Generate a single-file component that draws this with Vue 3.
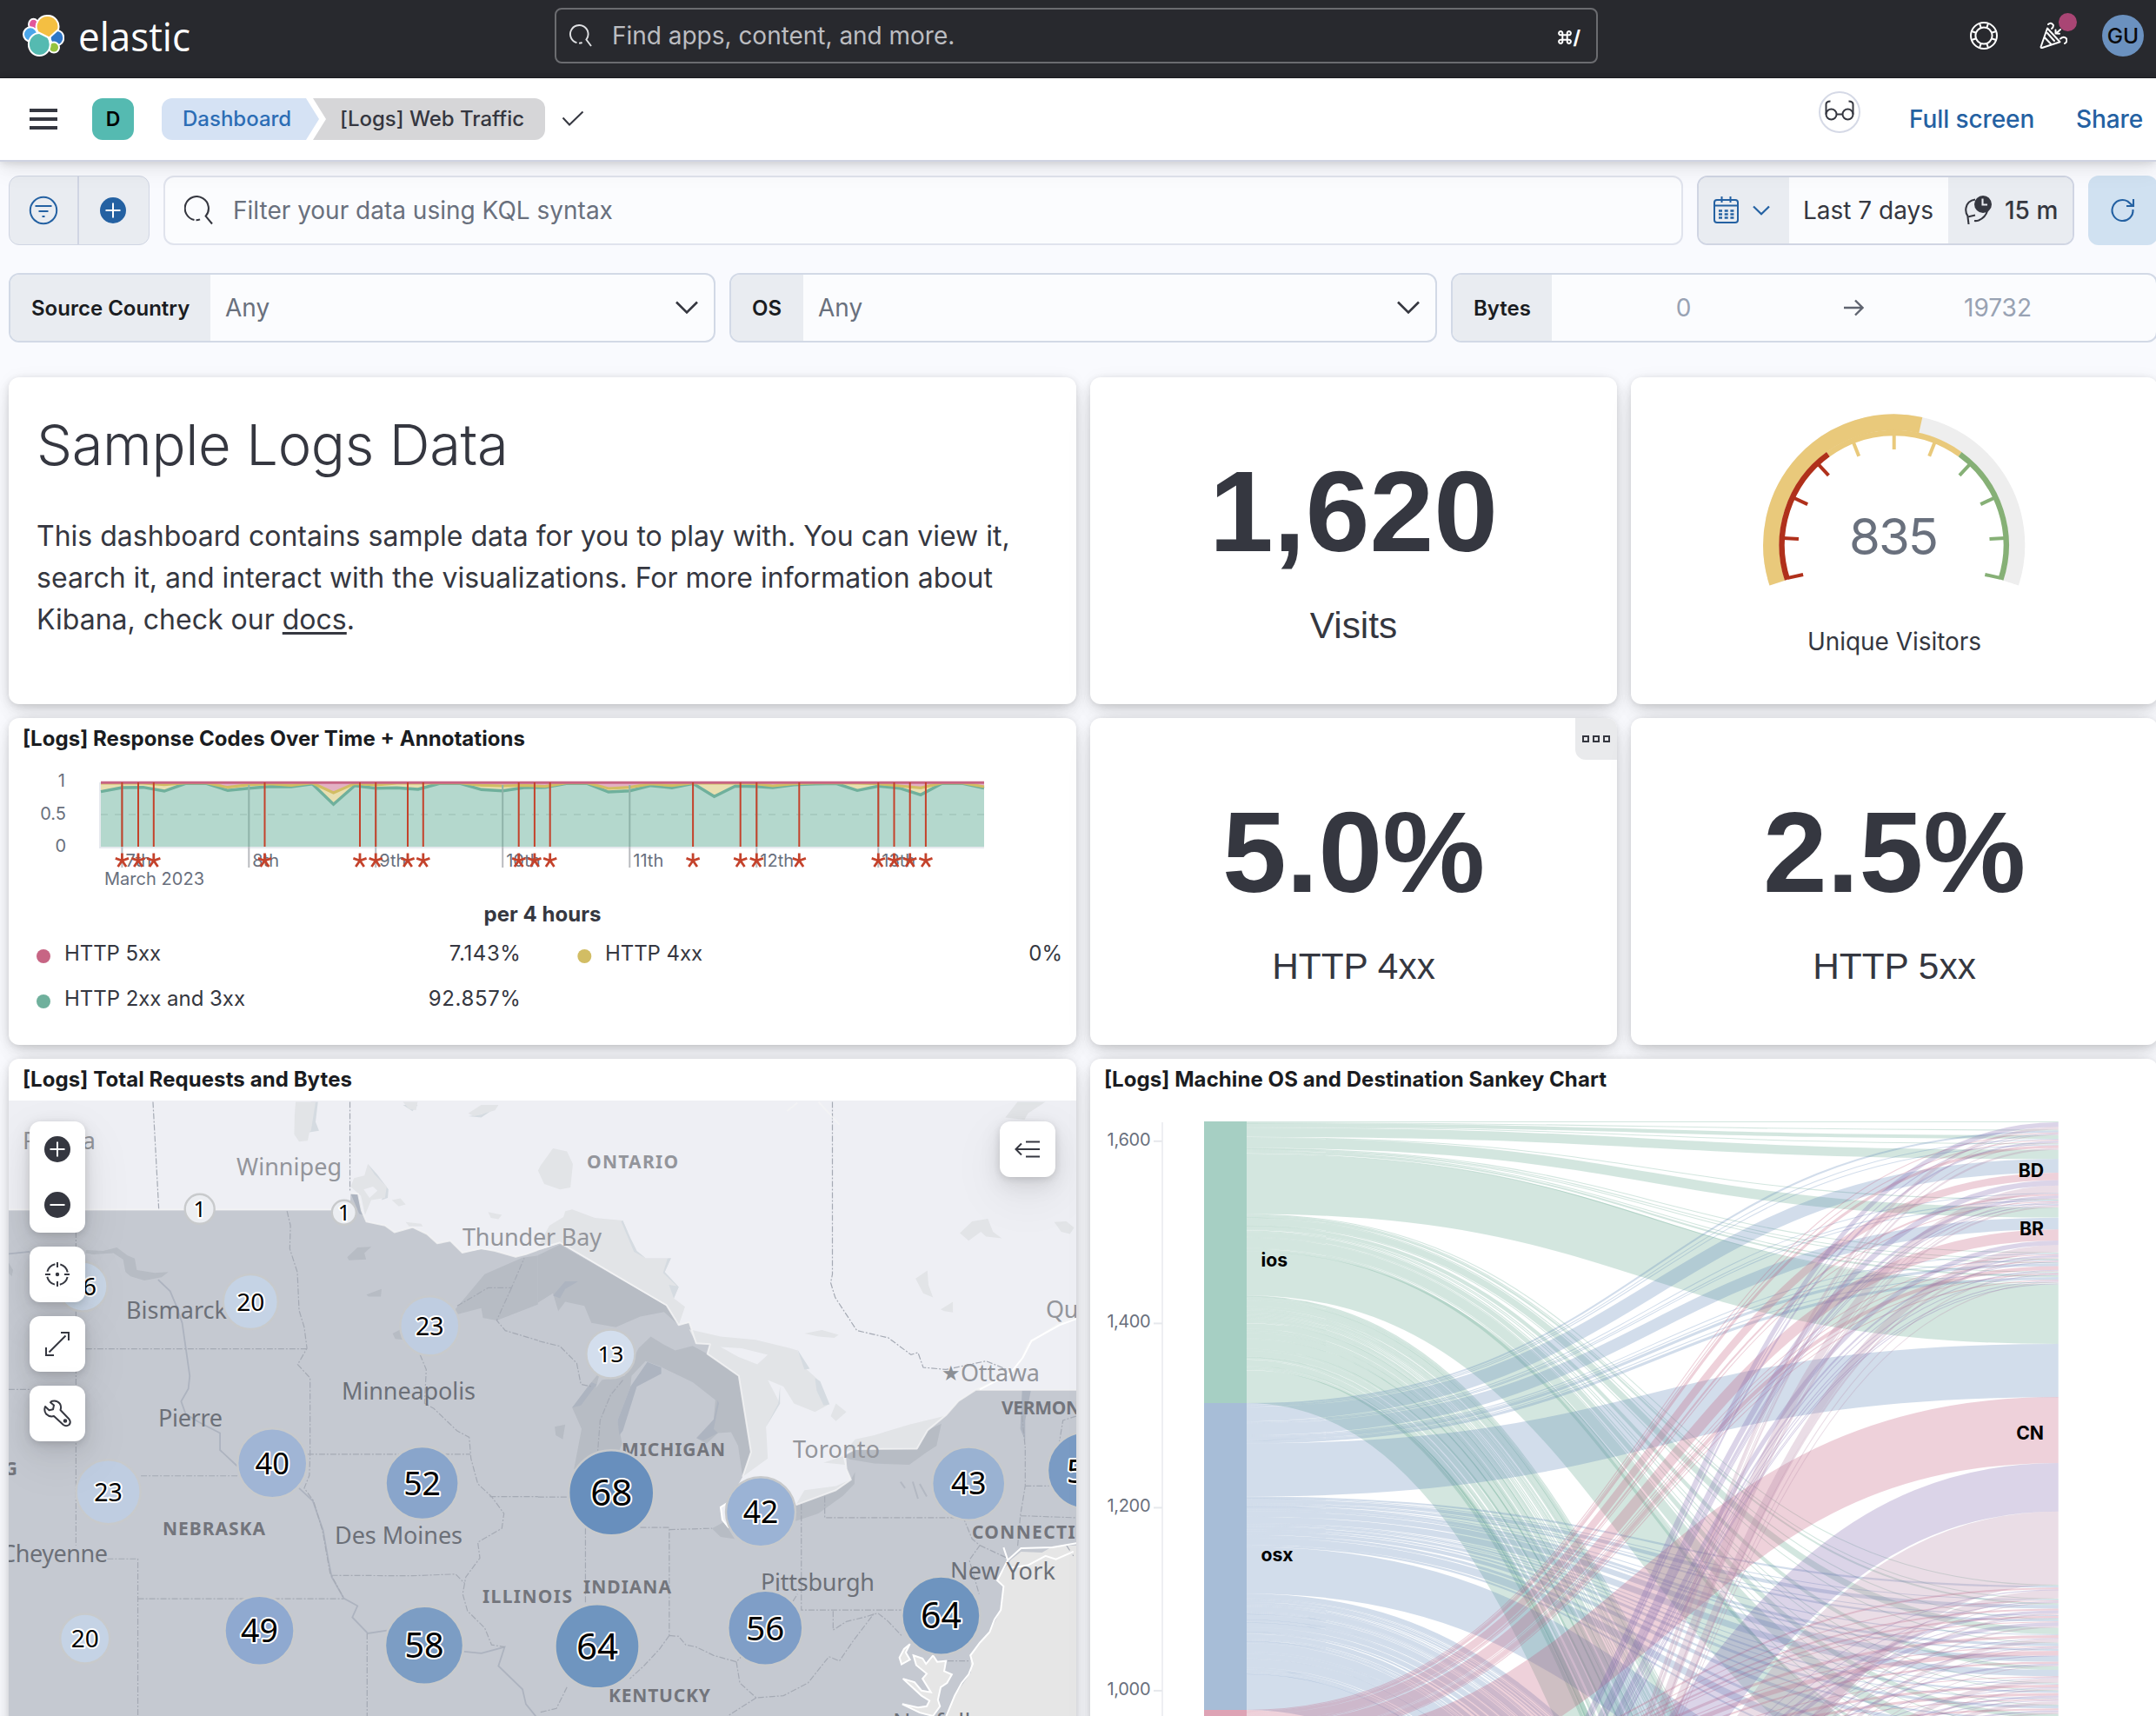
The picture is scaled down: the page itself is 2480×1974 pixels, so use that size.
<script setup>
/* ---------- Response codes chart ---------- */
const px = (i) => (i <= 31 ? 116 + 24.33 * i : 888.9 + 24.31 * (i - 32))
const greenRaw = [272, 258, 257, 270, 244, 244, 268, 260, 254, 255, 245, 316, 251, 260, 259, 264, 244, 244, 265, 269, 258, 257, 244, 244, 273, 269, 251, 259, 244, 289, 253, 254, 258, 248, 245, 244, 268, 253, 260, 283, 244, 244, 260]
const yellowRaw = [243, 243, 243, 248, 242, 242, 257, 248, 245, 250, 242, 276, 244, 249, 243, 243, 242, 242, 250, 252, 250, 254, 242, 242, 261, 257, 245, 251, 242, 243, 243, 245, 252, 245, 242, 242, 243, 245, 252, 259, 242, 242, 255]
const toLine = (arr) => arr.map((v, i) => `${px(i).toFixed(1)},${(820 + v / 3).toFixed(1)}`).join(' ')
const greenLine = toLine(greenRaw)
const yellowLine = toLine(yellowRaw)
const greenArea = `116,974 ${greenLine} 1132,974`
const yellowArea = `${yellowLine} ${greenLine.split(' ').reverse().join(' ')}`
const pinkArea = `116,900 ${yellowLine} 1132,900`
const annotations = [140.4, 159, 176.8, 304.5, 414, 432.2, 469, 486.8, 596.7, 614.9, 632.7, 797.1, 851.7, 870.3, 919.3, 1010.3, 1028.5, 1046.7, 1064.9]
const days = [[140.4, '7th'], [286.3, '8th'], [432.2, '9th'], [578.2, '10th'], [724.3, '11th'], [870.3, '12th'], [1010.3, '13th']]

/* ---------- Gauge ---------- */
const gx = 2178.7
const gy = 627
const pt = (r, deg) => {
  const a = (deg * Math.PI) / 180
  return `${(gx + r * Math.sin(a)).toFixed(2)} ${(gy - r * Math.cos(a)).toFixed(2)}`
}
const arc = (r, a, b) => `M${pt(r, a)}A${r} ${r} 0 ${b - a > 180 ? 1 : 0} 1 ${pt(r, b)}`
const gaugeTicks = [-5, -4, -3, -2, -1, 0, 1, 2, 3, 4, 5].map((n) => {
  const a = n * 21.6
  return {
    d: `M${pt(128, n === 5 ? a - 0.8 : n === -5 ? a + 0.8 : a)}L${pt(110, a)}`,
    c: a < -36 ? '#b0301b' : a > 36 ? '#86b076' : '#e9c97b',
  }
})

/* ---------- Sankey ---------- */
let seed = 7
const rnd = () => {
  seed = (seed * 16807) % 2147483647
  return seed / 2147483647
}
const totals = [307.6, 335, 345, 262, 370.4]
const strokes = ['#62a68d', '#5e86b8', '#c25b7b', '#7e65ad', '#b486a6']
const rows = [
  [1, 0, 0, 5, 3], [1, 2, 1, 1, 1], [4, 1, 1, 2, 1], [1, 1, 3, 0, 2],
  [10, 15, 8, 6, 8], [0, 1, 2, 3, 1], [1, 1, 1, 1, 1], [0, 1, 0, 1, 2],
  [11, 13, 12, 5, 8], [1, 1, 1, 2, 2], [1, 1, 1, 1, 0], [1, 3, 4, 1, 1],
  [1, 1, 1, 1, 0], [2, 3, 1, 1, 1], [1, 0, 0, 1, 0],
  [65, 58, 72, 53, 80],
  [1, 2, 2, 1, 9], [1, 1, 1, 1, 1], [2, 4, 2, 3, 2], [0, 1, 2, 1, 0], [1, 2, 1, 4, 2],
  [7, 1, 3, 1, 4], [1, 3, 1, 1, 1], [0, 2, 5, 1, 0], [0, 6, 2, 2, 1], [4, 7, 1, 1, 5],
  [1, 1, 3, 1, 2], [1, 2, 3, 2, 1], [0, 1, 1, 1, 4], [1, 3, 2, 2, 2], [5, 2, 4, 1, 3],
  [1, 4, 3, 2, 2], [11, 3, 2, 2, 6], [1, 8, 3, 1, 3], [3, 2, 4, 3, 1],
  [48, 51, 58, 44, 62],
]
const tail = Array.from({ length: 40 }, () => totals.map(() => {
  const v = rnd()
  return v < 0.25 ? 0 : v < 0.65 ? 1 : v < 0.85 ? 2 : v < 0.94 ? 5 : 9
}))
const used = totals.map((_, s) => rows.reduce((n, r) => n + r[s], 0))
const share = [36, 39, 40, 30, 42]
const tailSum = totals.map((_, s) => tail.reduce((n, r) => n + r[s], 0))
tail.forEach((r) => rows.push(r.map((v, s) => (v * (totals[s] - used[s] - share[s])) / tailSum[s])))
rows.push(share)

const unit = 1.0535
const src = totals.map((_, s) => totals.slice(0, s).reduce((a, b) => a + b, 0))
const links = []
let dst = 0
rows.forEach((r) => {
  r.forEach((v, s) => {
    if (v > 0) {
      const y0 = 1290 + (src[s] + v / 2) * unit
      const y1 = 1290 + (dst + v / 2) * unit
      links.push({
        s,
        d: `M1434 ${y0.toFixed(1)}C1900.8 ${y0.toFixed(1)} 1900.8 ${y1.toFixed(1)} 2367.7 ${y1.toFixed(1)}`,
        c: strokes[s],
        w: (v * unit).toFixed(2),
      })
    }
    src[s] += v
    dst += v
  })
})
links.sort((a, b) => a.s - b.s)
const axis = [[1312.8, '1,600'], [1522.4, '1,400'], [1734.4, '1,200'], [1944.9, '1,000']]

/* ---------- Map ---------- */
const clusters = [
  [229.7, 1390.8, 17, '1', 25, '#eceef2'], [395.8, 1394.7, 14, '1', 25, '#eceef2'],
  [95, 1480, 28.5, '16', 28, '#c9d6e6'], [288.3, 1497.5, 31.5, '20', 28, '#c5d3e5'],
  [494.3, 1525.3, 34, '23', 28.5, '#bfcde1'], [124.6, 1716.3, 37, '23', 28.5, '#bfcde1'],
  [313.2, 1683.2, 40, '40', 34.5, '#a0b5d5'], [485.6, 1706, 42, '52', 37.5, '#89a5cb'],
  [298.5, 1875.7, 40, '49', 37.5, '#8fa9d0'], [488, 1892.7, 45, '58', 39.5, '#7c9dc4'],
  [97.7, 1885, 28.5, '20', 28, '#c5d3e5'], [702.4, 1557.5, 28, '13', 26, '#d3deed'],
  [703.2, 1717.3, 49, '68', 42, '#688fbd'], [875, 1739.2, 40, '42', 35.5, '#9bb3d5'],
  [1114.2, 1706.6, 42, '43', 35.5, '#9ab2d2'], [1249, 1691.5, 44, '58', 39, '#7a9bc4'],
  [687, 1893.7, 48.5, '64', 42, '#6f95bf'], [880.3, 1872.8, 43, '56', 38.5, '#7f9ec7'],
  [1082.4, 1858.6, 45, '64', 41, '#6e94bf'],
]
const cities = [
  ['Regina', 26, 1322, 84, 1], ['Winnipeg', 272, 1352, 121, 1], ['Thunder Bay', 532, 1433, 160, 1],
  ['Bismarck', 145, 1517, 116, 0], ['Minneapolis', 393, 1610, 154, 0], ['Pierre', 182, 1641, 74, 0],
  ['Des Moines', 385, 1776, 147, 0], ['Cheyenne', 1, 1797, 123, 0], ['Toronto', 912, 1677, 100, 1],
  ['Ottawa', 1105, 1588.5, 91, 1], ['Quebec', 1203, 1516, 96, 1], ['Pittsburgh', 875, 1830, 131, 0],
  ['New York', 1093, 1817, 121, 0], ['Norfolk', 1027, 1991, 97, 0],
]
const states = [
  ['NEBRASKA', 187, 1766, 118, 0], ['ILLINOIS', 555, 1843.5, 103, 0], ['WYOMING', -98, 1697, 118, 0],
  ['ONTARIO', 675, 1344, 105, 1], ['MICHIGAN', 715, 1675, 119, 0], ['INDIANA', 671, 1832.5, 101, 0],
  ['KENTUCKY', 700, 1958, 117, 0], ['VERMONT', 1152, 1627, 103, 0], ['CONNECTICUT', 1118, 1770, 164, 0],
]
</script>

<template>
  <div class="page">
    <header class="top">
      <div class="brand">
        <svg width="48" height="48" viewBox="0 0 48 48">
          <g stroke="#fff" stroke-width="2">
            <ellipse cx="12.5" cy="11" rx="5.5" ry="6.2" fill="#e2579a" />
            <ellipse cx="9" cy="22.5" rx="8" ry="8.2" fill="#4ba6ea" />
            <ellipse cx="39.5" cy="26.5" rx="7.8" ry="8.6" fill="#2f77c8" />
            <ellipse cx="36" cy="37.6" rx="6" ry="6" fill="#96c33f" />
            <ellipse cx="19.3" cy="34" rx="12.4" ry="13" fill="#55bab1" />
            <path d="M28.7 1A12.6 12.6 0 0 1 41 17L30.5 26.5L17.5 20A12.6 12.6 0 0 1 28.7 1Z" fill="#f4bf42" stroke-linejoin="round" />
            <path d="M30.5 26.5L32 34" fill="none" />
          </g>
        </svg>
        <svg class="word" width="132" height="48" viewBox="0 0 132 48">
          <text x="-1" y="42" textLength="129" lengthAdjust="spacingAndGlyphs">elastic</text>
        </svg>
      </div>
      <div class="find">
        <svg width="26" height="26" viewBox="0 0 26 26" fill="none" stroke="#dfe0e3" stroke-width="1.9">
          <path d="M8.5 21.2A10.3 10.3 0 1 1 19.4 17.6L25 25M11 21.6Q13 21.6 14.6 21" />
        </svg>
        <span class="find-text">Find apps, content, and more.</span>
        <span class="keys"><svg width="16" height="16" viewBox="0 0 16 16" fill="none" stroke="#fff" stroke-width="2">
          <path d="M5.3 5.3H10.7V10.7H5.3ZM5.3 5.3V3.3A2.1 2.1 0 1 0 3.3 5.3ZM10.7 5.3H12.7A2.1 2.1 0 1 0 10.7 3.3ZM10.7 10.7V12.7A2.1 2.1 0 1 0 12.7 10.7ZM5.3 10.7H3.3A2.1 2.1 0 1 0 5.3 12.7Z" />
        </svg>/</span>
      </div>
      <div class="tools">
        <svg width="32" height="32" viewBox="0 0 32 32" fill="none" stroke="#fff" stroke-width="2">
          <circle cx="16" cy="16" r="15" /><circle cx="16" cy="16" r="9.6" />
          <path d="M11 2L12.8 7.2M21 2L19.2 7.2M11 30L12.8 24.8M21 30L19.2 24.8M2 11L7.2 12.8M2 21L7.2 19.2M30 11L24.8 12.8M30 21L24.8 19.2" />
        </svg>
        <div class="cheer">
          <svg width="32" height="32" viewBox="0 0 32 32" fill="none" stroke="#fff" stroke-width="2" stroke-linecap="round" stroke-linejoin="round">
            <path d="M9 7.5L1.5 29Q1.6 30.2 3 30L23.5 23.2ZM5.8 18L13.5 26M9 13L17 22M10 3Q13 0 16 4Q16 6.5 14 8M19 13.5L24 9M18.5 9.5L18.5 13.5L23 13.8M24 19.5Q28 16 31 19.5Q32.5 23 29 25" />
          </svg>
          <i class="badge"></i>
        </div>
        <div class="avatar">GU</div>
      </div>
    </header>

    <div class="nav">
      <div class="burger"><i></i><i></i><i></i></div>
      <div class="space">D</div>
      <div class="crumbs">
        <span class="c1">Dashboard</span>
        <span class="c2">[Logs] Web Traffic</span>
      </div>
      <svg class="check" width="26" height="20" viewBox="0 0 26 20" fill="none" stroke="#353740" stroke-width="2"><path d="M1.5 8.5L9 16.5L24.5 1.5" /></svg>
      <div class="links">
        <span class="glasses">
          <svg width="34" height="26" viewBox="0 0 34 26" fill="none" stroke="#353740" stroke-width="2">
            <circle cx="7.5" cy="17.5" r="6" /><circle cx="26.5" cy="17.5" r="6" />
            <path d="M13.5 17.5H20.5M1.5 17.5V6Q1.5 2.5 6.5 2.5M32.5 17.5V6Q32.5 2.5 27.5 2.5" />
          </svg>
        </span>
        <a class="full">Full screen</a>
        <a class="share">Share</a>
      </div>
    </div>

    <main>
      <div class="query">
        <div class="filters">
          <span><svg width="34" height="34" viewBox="0 0 34 34" fill="none" stroke="#2461a2" stroke-width="2"><circle cx="17" cy="17" r="15.2" /><path d="M7.5 12H26.5M11.5 18H22.5M15.5 24H18.5" /></svg></span>
          <span><svg width="30" height="30" viewBox="0 0 30 30"><circle cx="15" cy="15" r="15" fill="#2461a2" /><path d="M6.5 15H23.5M15 6.5V23.5" stroke="#fff" stroke-width="2" /></svg></span>
        </div>
        <div class="kql">
          <svg width="34" height="34" viewBox="0 0 34 34" fill="none" stroke="#353740" stroke-width="2.1"><path d="M11.5 28A13.6 13.6 0 1 1 24.6 23.6L32 32.5M13.5 28.3Q16 28.3 18 27.4" /></svg>
          <span>Filter your data using KQL syntax</span>
        </div>
        <div class="time">
          <span class="cal">
            <svg width="32" height="32" viewBox="0 0 32 32" fill="none" stroke="#2461a2" stroke-width="2"><rect x="2" y="4" width="27" height="26" rx="3" /><path d="M1.5 10.5H29.5M10.5 0V7M20.5 0V7" /><path d="M7 16.5H24.5M7 20.5H24.5M7 24.5H24.5" stroke-width="2.4" stroke-dasharray="4 2.7" /></svg>
            <svg width="20" height="12" viewBox="0 0 20 12" fill="none" stroke="#2461a2" stroke-width="2.2"><path d="M1 1.5L10 10.2L19 1.5" /></svg>
          </span>
          <span class="last">Last 7 days</span>
          <span class="mins">
            <svg width="32" height="34" viewBox="0 0 32 34" fill="none" stroke="#353740" stroke-width="2.1"><path d="M13 4.5Q4 6 2.5 14Q1.5 19.5 4.5 23.5M27 17.5Q25 25 17 28.5Q14.5 29.3 12 29M5.5 33L4.5 24.5L13 22.5" /><circle cx="22" cy="10" r="10" fill="#353740" stroke="none" /><path d="M21.5 3.5V10.5H27" stroke="#e9ecf1" /></svg>
            15 m
          </span>
        </div>
        <div class="refresh">
          <svg width="30" height="30" viewBox="0 0 30 30" fill="none" stroke="#2461a2" stroke-width="2.1"><path d="M26.5 14A12 12 0 1 1 20.5 4.6L26 9.5M27 2V10H19" /></svg>
        </div>
      </div>

      <div class="controls">
        <div class="ctl"><b class="l1">Source Country</b><span>Any</span><svg width="26" height="16" viewBox="0 0 26 16" fill="none" stroke="#353740" stroke-width="2.6"><path d="M1 1.5L13 13.5L25 1.5" /></svg></div>
        <div class="ctl"><b class="l2">OS</b><span>Any</span><svg width="26" height="16" viewBox="0 0 26 16" fill="none" stroke="#353740" stroke-width="2.6"><path d="M1 1.5L13 13.5L25 1.5" /></svg></div>
        <div class="ctl"><b class="l3">Bytes</b><em class="n0">0</em>
          <svg class="arrow" width="23" height="20" viewBox="0 0 23 20" fill="none" stroke="#5f6470" stroke-width="2.4"><path d="M0 10H21M13 1.5L21.5 10L13 18.5" /></svg>
          <em class="n1">19732</em></div>
      </div>

      <div class="grid">
        <section class="panel wide md">
          <h1>Sample Logs Data</h1>
          <p>This dashboard contains sample data for you to play with. You can view it,<br>search it, and interact with the visualizations. For more information about<br>Kibana, check our <u>docs</u>.</p>
        </section>
        <section class="panel metric"><div class="num">1,620</div><div class="cap">Visits</div></section>
        <section class="panel">
          <svg width="606" height="376" viewBox="1876 434 606 376">
            <path :d="arc(141.3, -108, 108)" fill="none" stroke="#eeeeee" stroke-width="18.6" />
            <path :d="arc(141.3, -108, 12.5)" fill="none" stroke="#e9c97b" stroke-width="18.6" />
            <path :d="arc(129, -36, 36)" fill="none" stroke="#e9c97b" stroke-width="6.6" />
            <path :d="arc(129, -108, -36)" fill="none" stroke="#b0301b" stroke-width="6.4" />
            <path :d="arc(129, 36, 108)" fill="none" stroke="#86b076" stroke-width="6.4" />
            <path v-for="(t, i) in gaugeTicks" :key="i" :d="t.d" :stroke="t.c" stroke-width="4" />
            <text x="2127" y="638" textLength="103" class="g-num">835</text>
            <text x="2079" y="747.5" textLength="200" class="g-cap">Unique Visitors</text>
          </svg>
        </section>

        <section class="panel wide">
          <svg width="1228" height="376" viewBox="10 826 1228 376">
            <text x="26" y="858" textLength="578" class="title">[Logs] Response Codes Over Time + Annotations</text>
            <g class="ax">
              <text x="75" y="905" text-anchor="end">1</text>
              <text x="76" y="942.5" text-anchor="end">0.5</text>
              <text x="76" y="979.5" text-anchor="end">0</text>
              <text x="120" y="1017.5" textLength="115">March 2023</text>
            </g>
            <path d="M115 900V975H1132" fill="none" stroke="#e6e9ee" stroke-width="2" />
            <polygon :points="greenArea" fill="#b4d8cd" />
            <polygon :points="yellowArea" fill="#e8dfb0" />
            <polygon :points="pinkArea" fill="#e3b0c3" />
            <path d="M116 937H1132" stroke="#a7cbc0" stroke-width="2" stroke-dasharray="8 8" />
            <polyline :points="greenLine" fill="none" stroke="#6fb09c" stroke-width="3.4" />
            <polyline :points="yellowLine" fill="none" stroke="#d2bd64" stroke-width="3.2" />
            <path d="M116 900.3H1132" stroke="#c76584" stroke-width="3" />
            <path v-for="d in days" :key="d[1]" :d="`M${d[0]} 903V974`" stroke="#8fb3a9" stroke-width="2" />
            <path v-for="d in days" :key="'t' + d[1]" :d="`M${d[0]} 974V998`" stroke="#b9bbbf" stroke-width="2" />
            <g class="ax"><text v-for="d in days" :key="'l' + d[1]" :x="d[0] + 4" y="997">{{ d[1] }}</text></g>
            <g stroke="#c4422b">
              <path v-for="a in annotations" :key="a" :d="`M${a} 900V974`" stroke-width="2" />
              <path v-for="a in annotations" :key="'s' + a" :d="`M${a} 990V981.5M${a} 990l7.6 -2.6M${a} 990l4.8 7M${a} 990l-4.8 7M${a} 990l-7.6 -2.6`" stroke-width="2.8" />
            </g>
            <text x="556.5" y="1060" textLength="135" class="title soft">per 4 hours</text>
            <circle cx="50" cy="1100" r="8" fill="#c76584" /><circle cx="672.3" cy="1100" r="8" fill="#d2bd64" /><circle cx="50" cy="1152" r="8" fill="#6fb09c" />
            <g class="lg">
              <text x="74" y="1105.2" textLength="111">HTTP 5xx</text>
              <text x="599.5" y="1105.2" text-anchor="end" letter-spacing=".6">7.143%</text>
              <text x="696" y="1105.2" textLength="112">HTTP 4xx</text>
              <text x="1222" y="1105.2" text-anchor="end">0%</text>
              <text x="74" y="1157.2" textLength="208">HTTP 2xx and 3xx</text>
              <text x="599.5" y="1157.2" text-anchor="end" letter-spacing=".6">92.857%</text>
            </g>
          </svg>
        </section>
        <section class="panel metric pct">
          <span class="more"><i></i><i></i><i></i></span>
          <div class="num">5.0%</div><div class="cap">HTTP 4xx</div>
        </section>
        <section class="panel metric pct"><div class="num">2.5%</div><div class="cap">HTTP 5xx</div></section>

        <section class="panel wide tall map">
          <svg width="1228" height="756" viewBox="10 1218 1228 756">
            <text x="26" y="1250" textLength="379" class="title">[Logs] Total Requests and Bytes</text>
            <rect x="10" y="1266" width="1228" height="708" fill="#eeeff4" />
            <clipPath id="mapclip"><rect x="10" y="1266" width="1228" height="708" /></clipPath>
            <g clip-path="url(#mapclip)">
              <!-- western half -->
              <g transform="translate(0 1210) scale(.39541 .48724)" class="geo">
                <path class="us" d="M0 374H1018L1020 334L1042 337L1052 375L1066 401L1120 410L1148 426L1200 414L1242 430L1272 452L1310 446L1345 474L1400 466L1440 470L1500 484L1530 478L1572 466V1570H0Z" />
                <path class="shade2" d="M905 118H925L918 165L928 186L900 190ZM1070 265L1098 290L1130 325L1128 345L1110 350L1120 330L1085 300ZM1172 125L1200 140L1215 125ZM1362 152L1400 148L1450 128L1400 155Z" />
                <g class="lk-ca">
                  <path d="M860 118H918L905 185L900 190L895 210L870 212L856 195L857 150ZM1172 118H1215L1210 138L1190 135ZM1362 145L1400 125L1450 125L1440 138L1380 152ZM1030 298L1060 292L1070 265L1090 290L1125 318L1120 345L1080 350L1062 385L1050 340L1020 318ZM1420 378L1460 385L1450 395L1428 392ZM1140 350L1165 346L1180 360L1160 365ZM1180 402L1225 406L1230 412L1190 412Z" />
                </g>
                <path d="M1058 325L1085 318L1098 328L1075 345Z" fill="#eeeff4" />
                <path class="shade" d="M1020 334L1042 337L1052 375L1055 385L1045 382Z" />
                <g class="lk-us">
                  <path d="M1320 612L1410 525L1520 486L1572 480V594L1445 634L1405 628L1400 605L1330 620Z" />
                  <path d="M250 468L300 470L340 462L370 480L392 488L398 515L450 522L490 520L470 532L420 540L380 530L365 520L358 490L330 475L270 478L250 475ZM1010 485L1040 462L1080 460L1060 475L1065 490L1015 492ZM1066 573L1110 560L1108 578L1072 578ZM1142 665L1165 655L1180 680L1150 678ZM25 498L38 515L34 530L25 522Z" />
                </g>
                <g class="river">
                  <path d="M25 477L86 472M460 538L495 565L512 598L530 640L552 765L548 795L527 825L540 855L580 875L640 900V940L690 978M870 1030L910 1060L940 1130L955 1200L965 1240L1000 1290L1040 1308L1025 1335L1070 1373L1125 1366M1350 1416L1400 1420L1468 1405L1450 1450L1520 1505L1530 1540L1560 1570" />
                </g>
                <g class="st">
                  <path d="M445 118L462 372M1018 118V330M221 425V1165M835 376L845 410L843 465L865 520L870 610L885 650L893 700L866 738L902 770V950L900 1000L885 1030L912 1060L938 1130L960 1230L1000 1290M250 701H893M25 797H86M410 1001H692M895 950H1368M312 1197H401V1568M401 1291H1000M1068 1373V1568M965 1236L1200 1237L1325 1233L1352 1255M1222 715L1240 750L1235 830L1262 842L1330 895L1365 910L1370 960L1390 1020L1430 1050L1466 1090L1460 1125L1390 1158L1396 1195L1355 1240L1346 1280L1360 1320L1410 1360L1430 1400L1468 1405M1425 1050H1568M1330 600L1420 557H1488L1525 487M1488 557L1445 634L1470 658L1568 682" />
                </g>
                <path class="bd" d="M0 372H1018M1018 334L1042 335L1052 375L1066 401L1120 410L1148 426L1200 414L1242 430L1272 452L1310 446L1345 474L1400 464L1440 470L1500 484L1530 478L1570 466" />
              </g>
              <!-- eastern half -->
              <g transform="translate(620 1210) scale(.40179 .48724)" class="geo">
                <path class="us" d="M-3 469L60 452L365 600L400 645L430 640L450 688L490 690L482 713L572 765L607 945L583 1003L540 1065L520 1075L525 1100L545 1125L735 1070L850 1035L893 1010L880 985L876 950L905 938L1082 937L1113 893L1165 858L1200 825L1250 798H1545V1570H-3Z" />
                <g class="lk-us">
                  <path d="M-3 480L60 455L365 600L400 645L358 614L290 625L220 650L150 640L130 600L75 590L55 612L40 570L-3 592Z" />
                  <path d="M130 830L180 775L245 765L285 700L320 672L355 690L390 705L440 694L482 713L572 765L607 945L583 1003L570 930L550 898L512 900L480 925L450 912L500 868L505 822L440 780L370 752L345 742L305 730L265 765L262 790L225 870L238 925L200 1000L100 985L122 890L95 840L140 790L175 755L150 835Z" />
                  <path d="M735 1070L850 1035L893 1010L905 992L903 1020L870 1048L800 1090L735 1108ZM876 955L905 938L1082 937L1113 893L1152 878L1138 930L1110 945L1060 975L960 972L890 962ZM495 1125L530 1110L560 1150L520 1145ZM45 885L75 880L68 915L48 905Z" />
                </g>
                <path class="shade" d="M40 575L75 542L112 542L75 560L60 582ZM262 790L310 732L350 745L350 760L280 790L240 895L230 905L225 870ZM512 822L500 868L452 912L470 918L512 900L500 890L515 830ZM95 840L150 780L165 785L120 835ZM1383 800H1408L1392 870V918L1378 890Z" />
                <g class="lk-ca">
                  <path d="M75 376L95 372L160 392L240 398L262 440L280 470L305 487L378 487L360 520L400 555L386 582L418 602L400 645L365 598L60 450L-3 460L30 410L70 390ZM430 655L520 672L620 680L720 700L740 705L760 745L800 775L808 808L830 832L790 850L730 830L700 790L655 775L690 830L650 885L655 960L583 1003L607 945L572 765L482 713L490 690L450 688ZM5 268L40 228L80 235L97 265L90 320L60 325L15 312L-3 280ZM875 945L905 915L960 905L1060 880L1160 860L1113 893L1082 937L905 938ZM815 970L870 955L876 975ZM735 1070L760 1035L850 1025L893 1010L850 1035ZM1335 155L1370 118H1450L1400 145L1390 160ZM1205 428L1240 400L1285 394L1300 425L1325 440L1280 436L1265 425L1230 446ZM1475 402L1510 400L1532 415L1520 430L1495 425ZM1078 535L1112 516L1115 550L1128 580L1100 570ZM1150 608L1185 590V615L1160 612ZM760 665L810 657L858 668L845 675L800 672ZM835 860L850 830L880 850L850 872Z" />
                </g>
                <path d="M520 697L580 700L655 715L625 738L570 720Z" fill="#eeeff4" />
                <path class="shade2" d="M240 398L262 440L280 470L305 487L272 472L235 400ZM378 487L360 520L400 555L386 582L372 550L395 553L355 522L368 488ZM690 790L690 830L650 885L685 830ZM790 770L805 778L832 832L815 835L795 800ZM740 703L775 748L760 750Z" />
                <path class="sea" d="M1545 1165L1470 1168L1440 1182L1380 1180L1350 1200L1312 1245L1330 1262L1322 1318L1290 1370L1235 1425L1237 1465L1190 1520L1165 1570H1545Z" />
                <path class="sea" stroke="#fff" stroke-width="2" d="M1062 1398L1050 1418L1062 1435L1038 1446L1032 1430L1045 1410ZM1072 1425L1098 1432L1108 1445L1128 1425L1140 1440L1165 1438L1160 1462L1182 1470L1168 1490L1150 1500L1142 1530L1148 1545L1128 1568L1090 1560L1040 1540L1085 1548L1110 1545L1118 1532L1095 1520L1042 1480L1075 1488L1095 1508L1122 1512L1098 1480L1110 1468L1080 1448Z" />
                <path d="M520 1075L545 1062L540 1120L525 1105Z" fill="#eeeff4" stroke="#fff" stroke-width="2" />
                <g class="st">
                  <path d="M840 118V525L835 545L848 580L910 658L1000 675L1065 715L1085 710L1100 745L1165 750L1280 730L1340 750M0 683L60 695L108 735L120 785L150 790M240 775L205 810L175 870L168 945M-3 1051H86M133 1125V1300M290 1123H373V1378M373 1128L495 1125M751 1068V1318H1040M818 1050V1100H1215L1240 1150L1262 1165L1232 1200L1260 1280M842 1320V1365L880 1345L930 1335L970 1325L1000 1345L1040 1380M373 1378L400 1380L420 1400L450 1405L500 1425L565 1440L600 1410L680 1360L740 1280M565 1440L575 1490L622 1525L700 1520L770 1490L830 1428L860 1438L900 1390L960 1325M622 1525L540 1568M373 1378L345 1410L300 1450L260 1480M80 1500L50 1550L0 1560M1383 860L1392 935V1025L1378 1095L1370 1170M1392 1025H1460M1378 1095L1538 1100M1538 860L1500 870L1490 920M1262 1165L1340 1195M1170 1438H1235M1510 1165L1530 1190" />
                </g>
                <path class="bd" d="M-3 467L60 450L365 598L400 645L430 638L450 688L490 690L482 713L572 765L607 945L583 1003M735 1070L850 1035L893 1010L880 985L876 950L905 938L1082 937L1113 893L1165 858L1200 825L1250 798H1545M1250 798L1340 765L1380 730L1400 690L1490 640L1540 625M710 140L740 120M800 118L860 172" />
                <path d="M1262 797L1348 760L1385 722L1410 682L1490 645L1540 630M1330 1170L1342 1200L1312 1248L1330 1262L1322 1318L1304 1340L1290 1370L1262 1395L1235 1425L1242 1445L1230 1470L1210 1490L1190 1520L1165 1570M1342 1200L1380 1172L1470 1170L1540 1160M1350 1218L1400 1212L1450 1190L1480 1198L1530 1180" fill="none" stroke="#fff" stroke-width="2" />
                <path d="M1035 1015L1048 1030M1070 1015L1085 1055M1090 1020L1110 1050" fill="none" stroke="#b3b8c2" stroke-width="2" />
              </g>
              <text x="1083" y="1587.5" font-size="24" fill="#8b8f95" font-family="DejaVu Sans">★</text>
              <g class="city"><text v-for="c in cities" :key="c[0]" :x="c[1]" :y="c[2]" :textLength="c[3]" :class="{ ca: c[4] }">{{ c[0] }}</text></g>
              <g class="state"><text v-for="c in states" :key="c[0]" :x="c[1]" :y="c[2]" :textLength="c[3]" :class="{ ca: c[4] }">{{ c[0] }}</text></g>
              <g v-for="(c, i) in clusters" :key="i">
                <circle :cx="c[0]" :cy="c[1]" :r="c[2]" :fill="c[5]" stroke="#c8cacc" stroke-width="2.4" />
                <text :x="c[0]" :y="c[1] + c[4] * 0.36" :font-size="c[4]" class="cl">{{ c[3] }}</text>
              </g>
            </g>
          </svg>
          <div class="mapctl">
            <div class="btn two">
              <svg width="30" height="30" viewBox="0 0 30 30"><circle cx="15" cy="15" r="15" fill="#353740" /><path d="M6.5 15H23.5M15 6.5V23.5" stroke="#fff" stroke-width="2" /></svg>
              <svg width="30" height="30" viewBox="0 0 30 30"><circle cx="15" cy="15" r="15" fill="#353740" /><path d="M6.5 15H23.5" stroke="#fff" stroke-width="2" /></svg>
            </div>
            <div class="btn"><svg width="30" height="30" viewBox="0 0 30 30" fill="none" stroke="#353740" stroke-width="2"><circle cx="15" cy="15" r="12" stroke-dasharray="12.85 6" stroke-dashoffset="-3" /><path d="M15 1V7M15 23V29M1 15H7M23 15H29" /><circle cx="15" cy="15" r="1.2" fill="#353740" /></svg></div>
            <div class="btn"><svg width="30" height="30" viewBox="0 0 30 30" fill="none" stroke="#353740" stroke-width="2"><path d="M5.5 24.5L24.5 5.5M19 2H28V11M11 28H2V19" /></svg></div>
            <div class="btn"><svg width="32" height="32" viewBox="0 0 32 32" fill="none" stroke="#353740" stroke-width="2" stroke-linejoin="round"><path d="M10 1.8Q15.5 .4 18.8 4.6Q21 8 19.5 12L29.5 22.5Q32 26 29.5 29Q26 31.5 22.8 29L12 19Q7 20.5 3 16.5Q.2 12.5 2 8L6.5 12.3L11 11.3L12 6.6L8 3.2Q8.7 2.2 10 1.8Z" /><circle cx="25" cy="24.5" r="1.3" fill="#353740" /></svg></div>
          </div>
          <div class="btn legend"><svg width="30" height="22" viewBox="0 0 30 22" fill="none" stroke="#353740" stroke-width="2"><path d="M13 2.5H29M2 11H29M13 19.5H29M8 4.5L1.5 11L8 17.5" /></svg></div>
        </section>

        <section class="panel sank tall">
          <svg width="1228" height="756" viewBox="1254 1218 1228 756">
            <text x="1270" y="1250" textLength="578" class="title">[Logs] Machine OS and Destination Sankey Chart</text>
            <path d="M1337 1291V1980" stroke="#eeeff2" stroke-width="2" />
            <g v-for="a in axis" :key="a[0]">
              <path :d="`M1327 ${a[0]}H1337`" stroke="#e6e8ec" stroke-width="2" />
              <text x="1273.5" :y="a[0] + 5" textLength="50" class="sx">{{ a[1] }}</text>
            </g>
            <g fill="none" stroke-opacity=".28">
              <path v-for="(l, i) in links" :key="i" :d="l.d" :stroke="l.c" :stroke-width="l.w" />
            </g>
            <rect x="1385" y="1290" width="49" height="324" fill="#a6cfc3" />
            <rect x="1385" y="1614" width="49" height="353" fill="#a7bdd7" />
            <rect x="1385" y="1967" width="49" height="20" fill="#dea3b5" />
            <g class="nm">
              <text x="1450.5" y="1457">ios</text><text x="1450.5" y="1795.5">osx</text>
              <text x="2351" y="1354" text-anchor="end">BD</text><text x="2351" y="1421" text-anchor="end">BR</text><text x="2351" y="1656" text-anchor="end">CN</text>
            </g>
          </svg>
        </section>
      </div>
    </main>
  </div>
</template>

<style>
body { background: #f9fafe; overflow: hidden; }
</style>

<style scoped>
* { box-sizing: border-box; }
.page { width: 2480px; height: 1974px; overflow: hidden; background: #f9fafe; font-family: Inter, sans-serif; color: #353740; }
svg { display: block; flex: none; }
.top { height: 90px; background: #28292e; border-bottom: 1px solid #1d1e24; padding: 0 0 8px 26px; display: flex; align-items: center; }
.brand { width: 612px; display: flex; gap: 17px; }
.word { overflow: visible; }
.word text { font: 400 46px "Open Sans", "Noto Sans", sans-serif; fill: #fff; }
.find { width: 1200px; height: 64px; border: 2px solid #6b6c70; border-radius: 8px; display: flex; align-items: center; padding: 0 18px 0 15px; }
.find-text { margin-left: 23px; font-size: 28px; color: #bcbdc1; letter-spacing: -.02px; }
.keys { margin-left: auto; display: flex; align-items: center; gap: 1px; color: #fff; font: 700 22px Inter, sans-serif; padding-top: 4px; }
.tools { margin-left: 428px; display: flex; align-items: center; gap: 40px; }
.cheer { position: relative; margin-left: 8px; }
.badge { position: absolute; left: 22px; top: -10px; width: 21px; height: 21px; border-radius: 50%; background: #a94574; }
.avatar { width: 48px; height: 48px; border-radius: 50%; background: #6b91bf; color: #0b0b0d; font-size: 24.5px; font-weight: 500; display: grid; place-items: center; }

.nav { position: relative; z-index: 2; height: 96px; background: #fff; border-bottom: 2px solid #cfd3e2; box-shadow: 0 1.4px 8px rgba(0,0,0,.10), 0 4px 16px rgba(0,0,0,.07), 0 12px 24px rgba(0,0,0,.05); display: flex; align-items: center; padding-left: 34px; }
.burger { width: 32px; display: flex; flex-direction: column; gap: 6px; }
.burger i { height: 4px; background: #353740; }
.space { margin-left: 40px; width: 48px; height: 48px; border-radius: 12px; background: #55bab1; color: #000; font-weight: 600; font-size: 23px; display: grid; place-items: center; }
.crumbs { margin-left: 32px; display: flex; font-size: 24px; font-weight: 500; line-height: 48px; }
.c1 { width: 181px; padding-left: 24px; background: #d5e2f4; color: #2c6db5; border-radius: 12px 0 0 12px; clip-path: polygon(0 0, 166px 0, 100% 50%, 166px 100%, 0 100%); }
.c2 { width: 267px; margin-left: -7px; padding-left: 31px; letter-spacing: -.03px; background: #d6d6d8; border-radius: 0 12px 12px 0; clip-path: polygon(0 0, 100% 0, 100% 100%, 0 100%, 15px 50%); }
.check { margin-left: 19px; }
.links { margin-left: auto; margin-right: 15px; display: flex; align-items: center; color: #2461a2; font-size: 28px; font-weight: 500; }
.glasses { width: 48px; height: 48px; margin: 0 56px 16px 0; border: 2px solid #d5d9e6; border-radius: 50%; display: grid; place-items: center; padding-bottom: 4px; }
.full { width: 192px; letter-spacing: -.1px; }
.share { width: 77px; letter-spacing: -.1px; }

main { padding: 16px 0 0 10px; width: 2482px; }
.query { display: flex; height: 80px; }
.filters { width: 162px; display: flex; background: #e9ecf1; border: 1px solid #d0d5e3; border-radius: 12px; }
.filters span { flex: 1; display: grid; place-items: center; padding-right: 1px; }
.filters span + span { border-left: 2px solid #d0d5e3; padding-right: 3px; }
.kql { margin-left: 16px; width: 1748px; background: #fbfcfe; border: 2px solid #e0e3ed; border-radius: 12px; display: flex; align-items: center; padding-left: 22px; font-size: 28px; color: #69707d; gap: 22px; }
.time { margin-left: 16px; width: 434px; border: 2px solid #d0d5e3; border-radius: 12px; background: #fbfcfe; overflow: hidden; display: flex; font-size: 28px; }
.time > span { display: flex; align-items: center; height: 100%; }
.cal { width: 104px; background: #e9ecf1; padding-left: 16px; gap: 14px; }
.last { width: 183px; padding-left: 16px; letter-spacing: 0; white-space: nowrap; }
.mins { flex: 1; background: #e9ecf1; padding-left: 18px; gap: 15px; font-weight: 500; white-space: nowrap; }
.refresh { margin-left: 16px; width: 80px; border-radius: 12px; background: #d0e1f1; display: grid; place-items: center; }

.controls { margin-top: 32px; display: grid; grid-template-columns: 813px 814px 813px; gap: 16px; height: 80px; }
.ctl { border: 2px solid #d2d9e6; border-radius: 12px; overflow: hidden; background: #fbfcfe; display: flex; align-items: center; font-size: 28px; color: #69707d; }
.ctl b { height: 76px; line-height: 77px; padding-left: 24px; background: #e9ecf1; color: #1a1c21; font-size: 24px; font-weight: 600; white-space: nowrap; }
.l1 { width: 230px; } .l2 { width: 83px; } .l3 { width: 114px; }
.ctl span { padding-left: 17px; flex: 1; }
.ctl > svg { margin-right: 18.5px; }
.ctl em { font-style: normal; color: #98a2b3; text-align: center; }
.n0 { width: 303px; }
.ctl > .arrow { margin: 0 0 0 33px; }
.n1 { width: 308px; }

.grid { margin-top: 40px; display: grid; grid-template-columns: 606px 606px 606px 606px; grid-template-rows: 376px 376px 780px; gap: 16px; }
.panel { position: relative; background: #fff; border-radius: 12px; box-shadow: 0 1.8px 8px -2px rgba(0,0,0,.12), 0 5px 16px -2px rgba(0,0,0,.08), 0 11px 24px -2px rgba(0,0,0,.06), 0 20px 40px -2px rgba(0,0,0,.04), 0 0 20px rgba(0,0,0,.04); overflow: visible; }
.wide, .sank { grid-column: span 2; }
.md { padding: 32px 32px; }
h1 { margin: 0; padding-top: 4px; font-weight: 300; font-size: 65px; line-height: 84px; letter-spacing: -.35px; }
p { margin: 39px 0 0; font-size: 32px; line-height: 48px; white-space: nowrap; letter-spacing: .01px; }
u { text-decoration-thickness: 3px; text-underline-offset: 3px; }
.metric { text-align: center; font-family: "Liberation Sans", Arial, sans-serif; padding-top: 79px; }
.num { font-size: 132.6px; font-weight: 700; line-height: 150px; }
.cap { font-size: 42.4px; line-height: 50px; margin-top: 32px; }
.more { position: absolute; right: 0; top: 0; width: 48px; height: 48px; background: #e9eaec; border-radius: 0 12px 0 12px; display: flex; align-items: center; justify-content: center; gap: 4px; }
.more i { width: 8px; height: 8px; border: 2px solid #353740; }
.title { font-size: 24px; font-weight: 700; fill: #1a1c21; }
.title.soft { fill: #353740; }
.g-num { font-size: 58px; fill: #69707d; }
.g-cap { font-size: 28px; fill: #353740; }
.ax { font-size: 20px; fill: #69707d; }
.lg { font-size: 24px; fill: #353740; }
.sx { font-size: 20px; fill: #69707d; }
.nm { font-size: 21.2px; font-weight: 700; fill: #000; }

.geo path { vector-effect: non-scaling-stroke; }
.us { fill: #c5c9d1; }
.sea { fill: #e6e6e6; }
.lk-us { fill: #b7bcc4; }
.lk-ca { fill: #e2e4e7; }
.shade { fill: #adb4c0; }
.shade2 { fill: #d5dbe1; }
.river { fill: none; stroke: #adb3bf; stroke-width: 1.8; }
.st { fill: none; stroke: #a5aab4; stroke-width: 1.2; stroke-dasharray: 7 2 2 2; }
.bd { fill: none; stroke: #f4f4f5; stroke-width: 2; stroke-linejoin: round; opacity: .8; }
.city, .state, .cl { font-family: "Noto Sans", sans-serif; }
.city { font-size: 27px; fill: #6c7078; }
.state { font-size: 21px; font-weight: 700; fill: #73757c; }
.city .ca, .state .ca { fill: #93959b; }
.cl { text-anchor: middle; fill: #000; stroke: #fff; stroke-width: 4px; paint-order: stroke; stroke-linejoin: round; }
.map { overflow: hidden; }
.map .btn { width: 64px; height: 64px; background: #fff; border-radius: 12px; display: flex; flex-direction: column; align-items: center; justify-content: center; box-shadow: 0 2px 8px rgba(0,0,0,.12), 0 8px 24px rgba(0,0,0,.10), 0 20px 60px rgba(0,0,0,.08); }
.mapctl { position: absolute; left: 24px; top: 72px; display: flex; flex-direction: column; gap: 16px; }
.map .two { height: 128px; gap: 34px; }
.map .legend { position: absolute; left: 1140px; top: 72px; }
</style>
